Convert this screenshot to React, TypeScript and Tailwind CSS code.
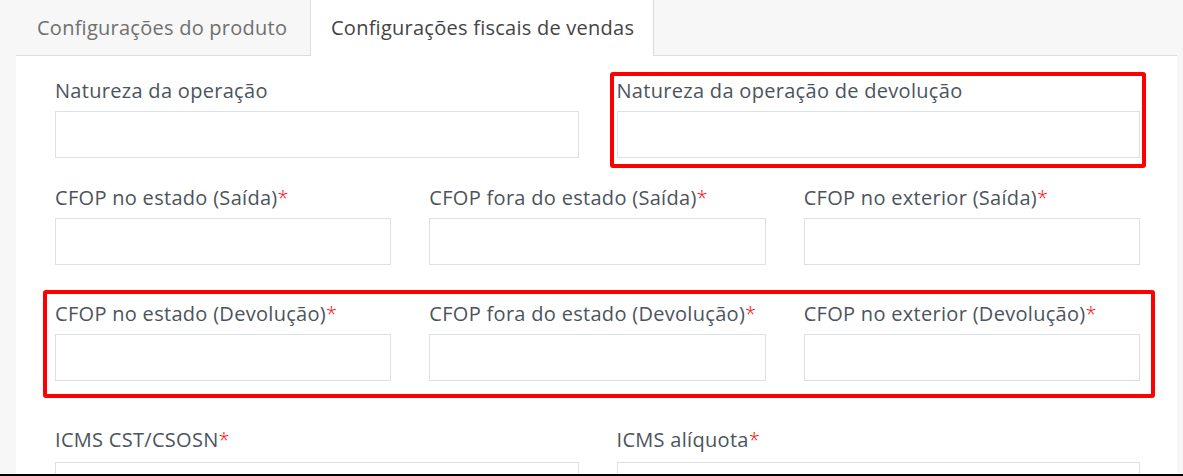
const font = { fontFamily: '"Open Sans", "Liberation Sans", sans-serif' };

function Field({ label, required }: { label: string; required?: boolean }) {
  return (
    <div>
      <label className="block h-[24px] text-[20px] leading-[24px] tracking-[0.3px] text-[#4b545c] whitespace-nowrap">
        {label}
        {required && <span className="font-light text-[#ff0000]">*</span>}
      </label>
      <div className="mt-2 h-[47px] border border-[#dce1e4] bg-white" />
    </div>
  );
}

export default function App() {
  return (
    <div className="flex h-[476px] w-full flex-col overflow-hidden bg-[#f7f7f7]" style={font}>
      <div className="flex flex-1 flex-col overflow-hidden pl-4 pr-[6px]">
        {/* tabs */}
        <div className="flex h-[56px] shrink-0 border-b border-[#dddddd]">
          <div className="w-[295px] border-r border-[#dddddd] pl-[21px] pt-[16px] text-[20px] leading-[24px] tracking-[0.25px] text-[#6f6f6f] whitespace-nowrap">
            Configurações do produto
          </div>
          <div className="-mb-px w-[343px] border-r border-[#dddddd] bg-white pl-[20px] pt-[16px] text-[20px] leading-[24px] tracking-[0.25px] text-[#444444] whitespace-nowrap">
            Configurações fiscais de vendas
          </div>
        </div>

        {/* panel */}
        <div className="flex-1 bg-white pl-[39px] pr-[37px] pt-[23px]">
          <div className="grid grid-cols-2 gap-x-[38px]">
            <Field label="Natureza da operação" />
            <div className="-ml-[7px] -mr-[6px] -mt-[7px] -mb-[10px] rounded-[3px] border-4 border-[#ff0000] pl-[3px] pr-[2px] pt-[3px] pb-[6px]">
              <Field label="Natureza da operação de devolução" />
            </div>
          </div>

          <div className="mt-[28px] grid grid-cols-3 gap-x-[38px]">
            <Field label="CFOP no estado (Saída)" required />
            <Field label="CFOP fora do estado (Saída)" required />
            <Field label="CFOP no exterior (Saída)" required />
          </div>

          <div className="-ml-[12px] -mr-[15px] mt-[25px] rounded-[3px] border-4 border-[#ff0000] pl-[8px] pr-[11px] pt-[8px] pb-[13px]">
            <div className="grid grid-cols-3 gap-x-[38px]">
              <Field label="CFOP no estado (Devolução)" required />
              <Field label="CFOP fora do estado (Devolução)" required />
              <Field label="CFOP no exterior (Devolução)" required />
            </div>
          </div>

          <div className="mt-[30px] grid grid-cols-2 gap-x-[38px]">
            <div>
              <label className="block h-[24px] text-[20px] leading-[24px] tracking-[0.3px] text-[#4b545c]">
                ICMS CST/CSOSN<span className="font-light text-[#ff0000]">*</span>
              </label>
              <div className="mt-[10px] h-[47px] border border-[#dce1e4]" />
            </div>
            <div>
              <label className="block h-[24px] text-[20px] leading-[24px] tracking-[0.3px] text-[#4b545c]">
                ICMS alíquota<span className="font-light text-[#ff0000]">*</span>
              </label>
              <div className="mt-[10px] h-[47px] border border-[#dce1e4]" />
            </div>
          </div>
        </div>
      </div>
      <div className="h-[2px] shrink-0 bg-black" />
    </div>
  );
}
